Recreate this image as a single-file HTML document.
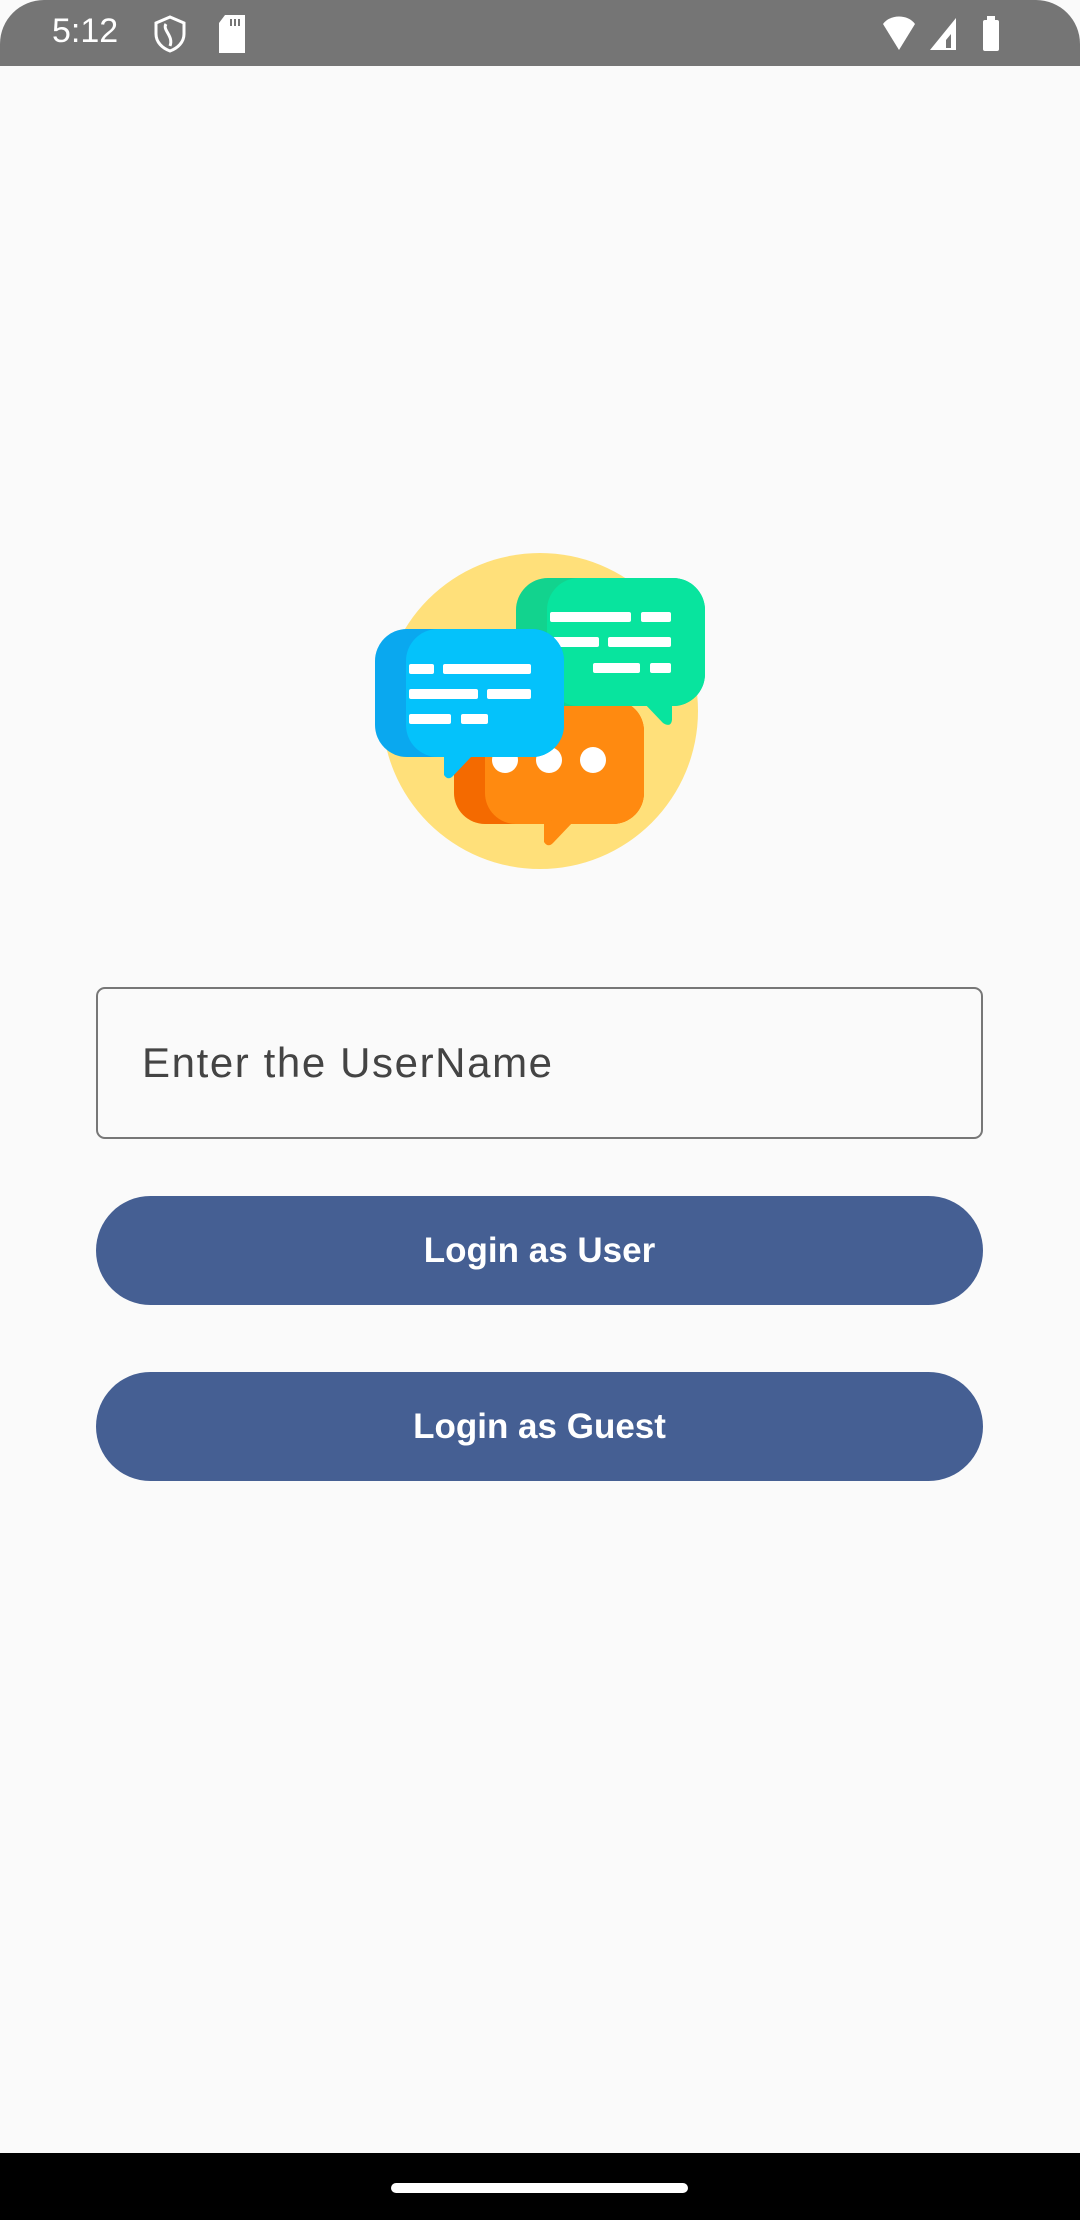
<!DOCTYPE html>
<html><head><style>
body{margin:0;width:1080px;height:2220px;background:#fafafa;position:relative;overflow:hidden;font-family:"Liberation Sans",sans-serif}
.sb{position:absolute;left:0;top:0;width:1080px;height:66px;background:#757575;border-radius:44px 44px 0 0}
.tf{position:absolute;left:96px;top:987px;width:887px;height:152px;border:2px solid #777;border-radius:9px;box-sizing:border-box}
.tf span{position:absolute;left:44px;top:50px;font-size:42px;color:#444;letter-spacing:1.6px}
.btn{position:absolute;left:96px;width:887px;height:109px;background:#455f93;border-radius:55px;color:#fff;font-size:35px;font-weight:bold;text-align:center;line-height:109px}
.nav{position:absolute;left:0;top:2153px;width:1080px;height:67px;background:#000}
.nav div{position:absolute;left:391px;top:30px;width:297px;height:10px;border-radius:5px;background:#fff}
</style></head><body>
<div class="sb">
<span style="position:absolute;left:52px;top:12px;font-size:34px;color:#fff">5:12</span>
<svg style="position:absolute;left:150px;top:14px" width="40" height="40" viewBox="0 0 40 40"><path d="M20 3L34 9V20C34 28 28 34 20 37C12 34 6 28 6 20V9Z" fill="none" stroke="#fff" stroke-width="3"/><path d="M16 10C12 16 24 22 20 32" fill="none" stroke="#fff" stroke-width="3"/></svg>
<svg style="position:absolute;left:216px;top:15px" width="32" height="38" viewBox="0 0 32 38"><path d="M9 0H29V38H3V8Z" fill="#fff"/><rect x="14" y="4" width="2" height="7" fill="#757575"/><rect x="18" y="4" width="2" height="7" fill="#757575"/><rect x="22" y="4" width="2" height="7" fill="#757575"/></svg>
<svg style="position:absolute;left:880px;top:14px" width="125" height="40" viewBox="0 0 125 40"><path d="M3 10C10 0 28 0 35 10L19 36Z" fill="#fff"/><path d="M50 36L76 4V36Z" fill="#fff"/><path d="M66 26L71 20V34H66Z" fill="#757575"/><rect x="103" y="6" width="16" height="31" rx="2" fill="#fff"/><rect x="107" y="2" width="8" height="5" fill="#fff"/></svg>
</div>
<svg style="position:absolute;left:360px;top:540px" width="360" height="340" viewBox="360 540 360 340">
<circle cx="540" cy="711" r="158" fill="#ffe07a"/>
<rect x="454" y="700" width="190" height="124" rx="31" fill="#f46a00"/>
<rect x="485" y="700" width="159" height="124" rx="31" fill="#ff8a10"/>
<path d="M544 820V842Q548 848 553 843L573 822Z" fill="#ff8a10"/>
<circle cx="505" cy="760" r="13" fill="#fff"/><circle cx="549" cy="760" r="13" fill="#fff"/><circle cx="593" cy="760" r="13" fill="#fff"/>
<rect x="516" y="578" width="189" height="128" rx="32" fill="#12d38e"/>
<rect x="547" y="578" width="158" height="128" rx="32" fill="#08e49e"/>
<path d="M643 702L663 723Q671 728 672 720V702Z" fill="#08e49e"/>
<g fill="#fff"><rect x="550" y="612" width="81" height="10" rx="2"/><rect x="641" y="612" width="30" height="10" rx="2"/><rect x="553" y="637" width="46" height="10" rx="2"/><rect x="608" y="637" width="63" height="10" rx="2"/><rect x="593" y="663" width="47" height="10" rx="2"/><rect x="650" y="663" width="21" height="10" rx="2"/></g>
<rect x="375" y="629" width="189" height="128" rx="32" fill="#0aa8ef"/>
<rect x="406" y="629" width="158" height="128" rx="32" fill="#04c2fb"/>
<path d="M444 753V775Q448 781 453 776L471 757Z" fill="#04c2fb"/>
<g fill="#fff"><rect x="409" y="664" width="25" height="10" rx="2"/><rect x="443" y="664" width="88" height="10" rx="2"/><rect x="409" y="689" width="69" height="10" rx="2"/><rect x="487" y="689" width="44" height="10" rx="2"/><rect x="409" y="714" width="42" height="10" rx="2"/><rect x="461" y="714" width="27" height="10" rx="2"/></g>
</svg>
<div class="tf"><span>Enter the UserName</span></div>
<div class="btn" style="top:1196px">Login as User</div>
<div class="btn" style="top:1372px">Login as Guest</div>
<div class="nav"><div></div></div>
</body></html>
